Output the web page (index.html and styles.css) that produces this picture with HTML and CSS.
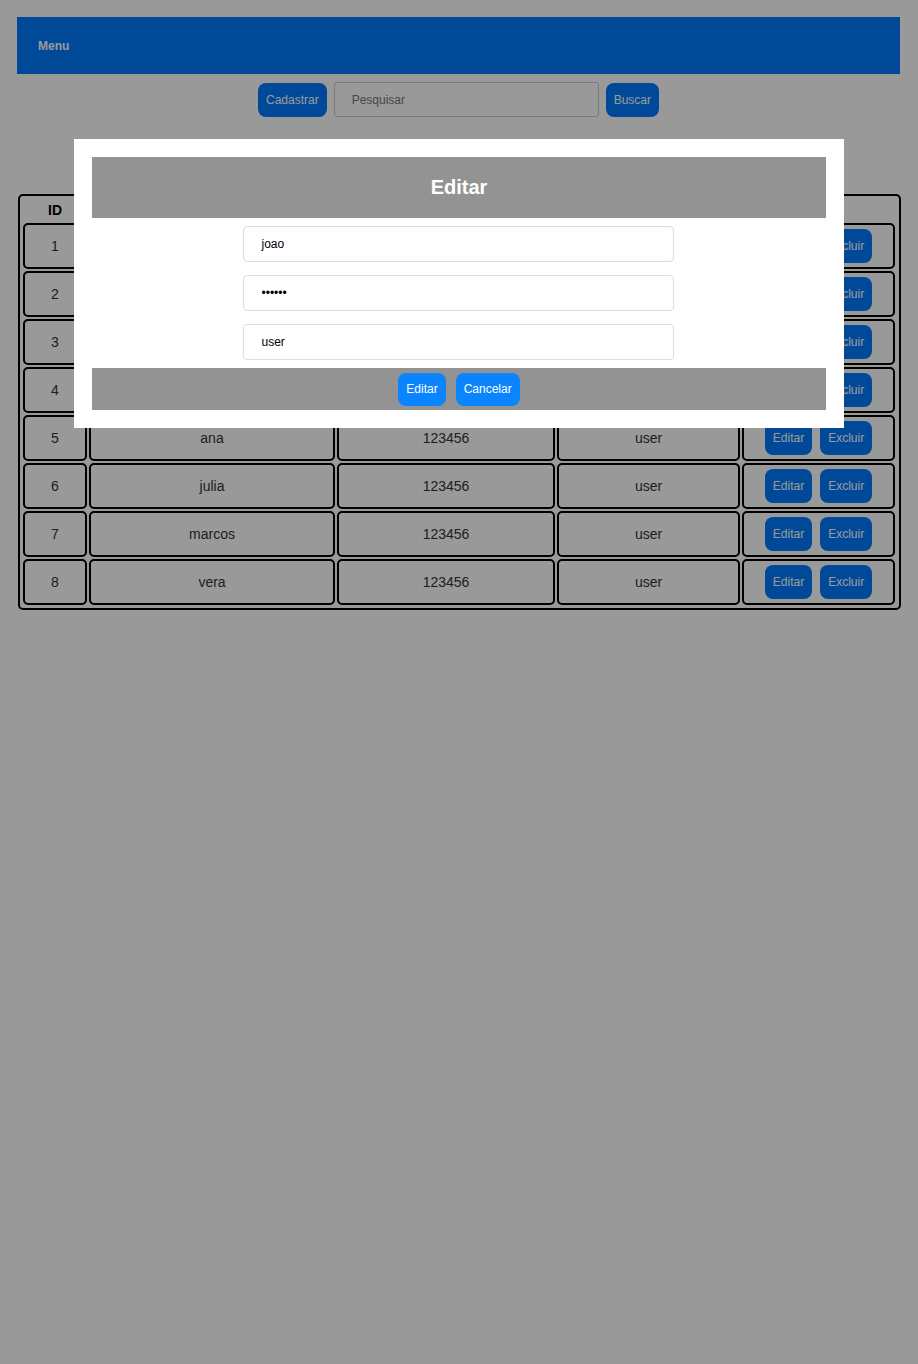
FILE: index.html
```html
<!DOCTYPE html>
<html lang="pt-BR">
<head>
  <meta charset="UTF-8">
  <title>Usuários</title>
  <link rel="stylesheet" href="styles.css">
</head>
<body>

<div class="page">
  <header class="menu-bar">
    <span class="menu-title">Menu</span>
  </header>

  <div class="toolbar">
    <button class="btn">Cadastrar</button>
    <input type="text" class="search" placeholder="Pesquisar">
    <button class="btn">Buscar</button>
  </div>

  <table class="users">
    <thead>
      <tr>
        <th class="col-id">ID</th>
        <th class="col-name">Nome</th>
        <th class="col-pass">Senha</th>
        <th class="col-role">Tipo</th>
        <th>Ações</th>
      </tr>
    </thead>
    <tbody>
      <tr><td>1</td><td>joao</td><td>123456</td><td>user</td><td><button class="btn">Editar</button><button class="btn">Excluir</button></td></tr>
      <tr><td>2</td><td>maria</td><td>123456</td><td>user</td><td><button class="btn">Editar</button><button class="btn">Excluir</button></td></tr>
      <tr><td>3</td><td>pedro</td><td>123456</td><td>user</td><td><button class="btn">Editar</button><button class="btn">Excluir</button></td></tr>
      <tr><td>4</td><td>carlos</td><td>123456</td><td>user</td><td><button class="btn">Editar</button><button class="btn">Excluir</button></td></tr>
      <tr><td>5</td><td>ana</td><td>123456</td><td>user</td><td><button class="btn">Editar</button><button class="btn">Excluir</button></td></tr>
      <tr><td>6</td><td>julia</td><td>123456</td><td>user</td><td><button class="btn">Editar</button><button class="btn">Excluir</button></td></tr>
      <tr><td>7</td><td>marcos</td><td>123456</td><td>user</td><td><button class="btn">Editar</button><button class="btn">Excluir</button></td></tr>
      <tr><td>8</td><td>vera</td><td>123456</td><td>user</td><td><button class="btn">Editar</button><button class="btn">Excluir</button></td></tr>
    </tbody>
  </table>
</div>

<!-- Modal de edição -->
<div class="overlay">
  <div class="modal">
    <div class="modal-header">Editar</div>
    <div class="modal-body">
      <input type="text" class="field" value="joao">
      <input type="password" class="field" value="123456">
      <input type="text" class="field" value="user">
    </div>
    <div class="modal-footer">
      <button class="btn btn-modal">Editar</button>
      <button class="btn btn-modal">Cancelar</button>
    </div>
  </div>
</div>

</body>
</html>
```

FILE: styles.css
```css
body {
  margin: 0;
  font-family: "Liberation Sans", Arial, sans-serif;
  background-color: #fff;
  color: #333;
}

.page {
  padding: 17px 18px 17px 17px;
}

.menu-bar {
  background-color: #007bff;
  height: 57px;
  display: flex;
  align-items: center;
  padding-left: 21px;
}

.menu-title {
  color: #fff;
  font-size: 12px;
  font-weight: bold;
}

.toolbar {
  display: flex;
  justify-content: center;
  align-items: center;
  gap: 7px;
  margin-top: 8px;
}

.btn {
  background-color: #007bff;
  color: #fff;
  border: none;
  border-radius: 8px;
  height: 34px;
  padding: 0 8px;
  font-family: "Liberation Sans", Arial, sans-serif;
  font-size: 12px;
  cursor: pointer;
}

.search {
  width: 265px;
  height: 35px;
  box-sizing: border-box;
  border: 1px solid #ccc;
  border-radius: 3px;
  padding: 0 17px;
  font-family: "Liberation Sans", Arial, sans-serif;
  font-size: 12px;
}

.search::placeholder {
  color: #757575;
}

.users {
  margin-top: 77px;
  width: 883px;
  margin-left: 1px;
  padding: 1px 2px 1px 1px;
  border: 2px solid #000;
  border-radius: 5px;
  border-spacing: 2px;
  table-layout: fixed;
  font-size: 14px;
}

.users th {
  height: 22px;
  padding: 0;
  font-size: 14px;
  color: #000;
}

.col-id { width: 64px; }
.col-name { width: 246px; }
.col-pass { width: 218px; }
.col-role { width: 183px; }

.users td {
  border: 2px solid #000;
  border-radius: 5px;
  height: 42px;
  padding: 0 2px;
  text-align: center;
  color: #333;
}

.users td .btn {
  margin: 0 4px;
}

.overlay {
  position: fixed;
  inset: 0;
  background-color: rgba(0, 0, 0, 0.4);
  display: flex;
  justify-content: center;
  align-items: flex-start;
  padding-top: 139px;
}

.modal {
  background-color: #fff;
  width: 80%;
  padding: 18px;
}

.modal-header {
  background-color: #939393;
  color: #fff;
  height: 61px;
  display: flex;
  align-items: center;
  justify-content: center;
  font-size: 20px;
  font-weight: bold;
}

.modal-body {
  display: flex;
  flex-direction: column;
  align-items: center;
  gap: 13px;
  padding: 8px 0;
}

.field {
  width: 431px;
  height: 36px;
  box-sizing: border-box;
  border: 1px solid #ddd;
  border-radius: 4px;
  padding: 0 17px;
  font-family: "Liberation Sans", Arial, sans-serif;
  font-size: 12px;
  color: #000;
}

.modal-footer {
  background-color: #939393;
  height: 42px;
  display: flex;
  justify-content: center;
  align-items: center;
  gap: 10px;
}

.btn-modal {
  background-color: #0a84ff;
  height: 33px;
  padding: 0 8px;
}
```
